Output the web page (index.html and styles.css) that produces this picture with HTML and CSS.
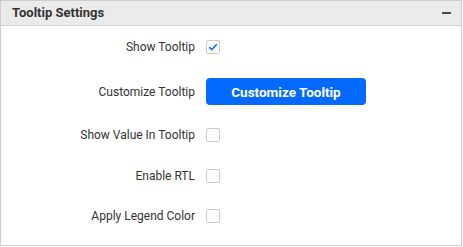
FILE: index.html
```html
<!DOCTYPE html>
<html lang="en">
    <head>
        <meta charset="UTF-8" />
        <meta name="viewport" content="width=device-width, initial-scale=1.0" />
        <title>Tooltip Settings</title>
        <link rel="stylesheet" href="styles.css">
    </head>

    <body>
        <div class="panel">
            <div class="panel__header">
                <h2>Tooltip Settings</h2>
                <span class="panel__collapse"></span>
            </div>

            <div class="settings">
                <label class="settings__label" for="showTooltip">Show Tooltip</label>
                <div class="settings__control">
                    <span class="check check--on" id="showTooltip">
                        <svg width="12" height="12" viewBox="0 0 12 12">
                            <path d="M2.2 6.2 L4.8 8.6 L9.8 3.2" fill="none" stroke="#0d6efd" stroke-width="1.6" />
                        </svg>
                    </span>
                </div>

                <label class="settings__label">Customize Tooltip</label>
                <div class="settings__control">
                    <button class="btn">Customize Tooltip</button>
                </div>

                <label class="settings__label">Show Value In Tooltip</label>
                <div class="settings__control"><span class="check"></span></div>

                <label class="settings__label">Enable RTL</label>
                <div class="settings__control"><span class="check"></span></div>

                <label class="settings__label">Apply Legend Color</label>
                <div class="settings__control"><span class="check"></span></div>
            </div>
        </div>
    </body>
</html>
```

FILE: styles.css
```css
/* CSS Reset */
html {
    box-sizing: border-box;
    font-size: 12px;
}

*,
*:before,
*:after {
    box-sizing: inherit;
}

body,
h2 {
    margin: 0;
    padding: 0;
    font-weight: normal;
}

body {
    font-family: Roboto, "Liberation Sans", sans-serif;
    color: #333;
    background: #fff;
}

.panel {
    width: 462px;
    height: 246px;
    border: 1px solid #cdcdcd;
}

.panel__header {
    display: flex;
    align-items: center;
    justify-content: space-between;
    height: 25px;
    padding: 0 10px 0 11px;
    background: #ebebeb;
    border-bottom: 1px solid #cdcdcd;
}

.panel__header h2 {
    font-size: 13px;
    font-weight: bold;
    color: #333;
    padding-bottom: 2px;
}

.panel__collapse {
    width: 9px;
    height: 2px;
    background: #4a4a4a;
    margin-bottom: 1px;
}

.settings {
    display: grid;
    grid-template-columns: 194px auto;
    grid-template-rows: 42px 47px 40px 41px 39px;
    column-gap: 11px;
    align-items: center;
}

.settings__label {
    text-align: right;
    font-size: 12px;
    color: #333;
}

.settings__control {
    display: flex;
    align-items: center;
}

.check {
    display: flex;
    align-items: center;
    justify-content: center;
    width: 14px;
    height: 14px;
    border: 1px solid #cbcbcb;
    border-radius: 2px;
    background: #fff;
}

.btn {
    width: 160px;
    height: 27px;
    border: none;
    border-radius: 4px;
    background: #0469ff;
    color: #fff;
    font-family: Roboto, "Liberation Sans", sans-serif;
    font-size: 13.5px;
    font-weight: bold;
    cursor: pointer;
}
```
